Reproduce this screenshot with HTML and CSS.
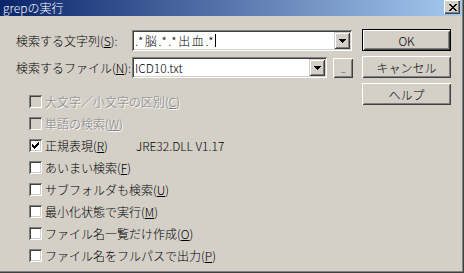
FILE: index.html
```html
<!DOCTYPE html>
<html lang="ja">
<head>
<meta charset="utf-8">
<title>grepの実行</title>
<link rel="stylesheet" href="styles.css">
</head>
<body>
<div class="window">
  <div class="titlebar">
    <span class="title">grepの実行</span>
    <span class="tb-close"><svg width="8" height="7" viewBox="0 0 8 7" shape-rendering="crispEdges"><path fill="#000" d="M0 0h2v1H0zM6 0h2v1H6zM1 1h2v1H1zM5 1h2v1H5zM2 2h4v1H2zM3 3h2v1H3zM2 4h4v1H2zM1 5h2v1H1zM5 5h2v1H5zM0 6h2v1H0zM6 6h2v1H6z"/></svg></span>
  </div>
  <div class="client">
    <div class="main">
      <div class="field-row">
        <span class="field-label">検索する文字列(<u>S</u>):</span>
        <div class="combo combo-wide">
          <span class="combo-text mono">.*脳.*.*出血.*</span><span class="caret"></span>
          <span class="drop"><svg width="7" height="4" viewBox="0 0 7 4" shape-rendering="crispEdges"><path fill="#000" d="M0 0h7v1H0zM1 1h5v1H1zM2 2h3v1H2zM3 3h1v1H3z"/></svg></span>
        </div>
      </div>
      <div class="field-row second">
        <span class="field-label">検索するファイル(<u>N</u>):</span>
        <div class="combo combo-narrow">
          <span class="combo-text">ICD10.txt</span>
          <span class="drop"><svg width="7" height="4" viewBox="0 0 7 4" shape-rendering="crispEdges"><path fill="#000" d="M0 0h7v1H0zM1 1h5v1H1zM2 2h3v1H2zM3 3h1v1H3z"/></svg></span>
        </div>
        <span class="btn browse">...</span>
      </div>
      <ul class="options">
        <li class="option disabled"><span class="box"></span><span>大文字／小文字の区別(<u>C</u>)</span></li>
        <li class="option disabled"><span class="box"></span><span>単語の検索(<u>W</u>)</span></li>
        <li class="option"><span class="box"><svg width="13" height="13" viewBox="0 0 13 13" shape-rendering="crispEdges"><path fill="#000" d="M3 5h1v3H3zM4 6h1v3H4zM5 7h1v3H5zM6 6h1v3H6zM7 5h1v3H7zM8 4h1v3H8zM9 3h1v3H9z"/></svg></span><span class="fixed">正規表現(<u>R</u>)</span><span>JRE32.DLL V1.17</span></li>
        <li class="option"><span class="box"></span><span>あいまい検索(<u>F</u>)</span></li>
        <li class="option"><span class="box"></span><span>サブフォルダも検索(<u>U</u>)</span></li>
        <li class="option"><span class="box"></span><span>最小化状態で実行(<u>M</u>)</span></li>
        <li class="option"><span class="box"></span><span>ファイル名一覧だけ作成(<u>O</u>)</span></li>
        <li class="option"><span class="box"></span><span>ファイル名をフルパスで出力(<u>P</u>)</span></li>
      </ul>
    </div>
    <div class="buttons">
      <span class="btn default">OK</span>
      <span class="btn">キャンセル</span>
      <span class="btn">ヘルプ</span>
    </div>
  </div>
</div>
</body>
</html>
```

FILE: styles.css
```css
html, body {
  margin: 0;
  padding: 0;
}
body {
  width: 464px;
  height: 273px;
  overflow: hidden;
  background: #d4d0c8;
  font-family: "Noto Sans CJK JP", sans-serif;
  font-size: 12px;
  font-weight: 300;
  color: #000;
}
.window {
  width: 464px;
  height: 273px;
  box-sizing: border-box;
  padding: 0 2px 2px 0;
  background: #d4d0c8;
  box-shadow: inset -1px -1px #404040, inset -2px -2px #808080;
}
.titlebar {
  height: 16px;
  display: flex;
  align-items: flex-start;
  background: linear-gradient(to right, #0a246a, #a6caf0);
  color: #fff;
  padding-left: 3px;
}
.title {
  line-height: 15px;
  white-space: nowrap;
}
.tb-close {
  margin-left: auto;
  margin-right: 2px;
  width: 16px;
  height: 14px;
  background: #d4d0c8;
  box-shadow: inset 1px 1px #fff, inset -1px -1px #404040, inset -2px -2px #808080;
  display: flex;
  align-items: center;
  justify-content: center;
  padding-left: 1px;
  box-sizing: border-box;
}
.client {
  display: flex;
  padding-top: 13px;
}
.main {
  width: 362px;
  box-sizing: border-box;
  padding: 1px 0 0 16px;
}
.field-row {
  display: flex;
  align-items: center;
  height: 21px;
}
.field-row.second {
  margin-top: 6px;
}
.field-label {
  width: 116px;
  flex: none;
  white-space: nowrap;
}
u {
  text-decoration: underline;
  text-decoration-thickness: 1px;
  text-underline-offset: 1px;
}
.combo {
  height: 21px;
  box-sizing: border-box;
  background: #fff;
  box-shadow: inset 1px 1px #808080, inset -1px -1px #fff, inset 2px 2px #404040, inset -2px -2px #d4d0c8;
  display: flex;
  align-items: center;
  padding: 2px 2px 2px 3px;
}
.combo-wide { width: 220px; }
.combo-narrow { width: 195px; }
.combo-text {
  white-space: nowrap;
  line-height: 15px;
}
.mono {
  letter-spacing: 1.6px;
}
.caret {
  width: 1px;
  height: 13px;
  background: #000;
}
.drop {
  margin-left: auto;
  width: 16px;
  height: 17px;
  flex: none;
  background: #d4d0c8;
  box-shadow: inset 1px 1px #d4d0c8, inset -1px -1px #404040, inset 2px 2px #fff, inset -2px -2px #808080;
  display: flex;
  align-items: center;
  justify-content: center;
}
.btn {
  display: flex;
  align-items: center;
  justify-content: center;
  box-sizing: border-box;
  background: #d4d0c8;
  box-shadow: inset 1px 1px #fff, inset -1px -1px #404040, inset 2px 2px #d4d0c8, inset -2px -2px #808080;
  height: 22px;
  white-space: nowrap;
}
.btn.default {
  border: 1px solid #000;
}
.browse {
  width: 20px;
  height: 20px;
  margin-left: 6px;
  font-size: 8px;
  align-items: flex-end;
  padding-bottom: 3px;
  letter-spacing: -0.5px;
}
.options {
  list-style: none;
  margin: 12px 0 0 13px;
  padding: 0;
}
.option {
  display: flex;
  align-items: center;
  height: 22px;
  gap: 3px;
  white-space: nowrap;
}
.box {
  width: 13px;
  height: 13px;
  flex: none;
  background: #fff;
  box-shadow: inset 1px 1px #808080, inset -1px -1px #fff, inset 2px 2px #404040, inset -2px -2px #d4d0c8;
  display: flex;
}
.option.disabled {
  color: #808080;
  text-shadow: 1px 1px 0 #fff;
}
.option.disabled .box {
  background: #d4d0c8;
}
.fixed {
  width: 88px;
  flex: none;
}
.buttons {
  width: 89px;
  display: flex;
  flex-direction: column;
  gap: 5px;
}
```
